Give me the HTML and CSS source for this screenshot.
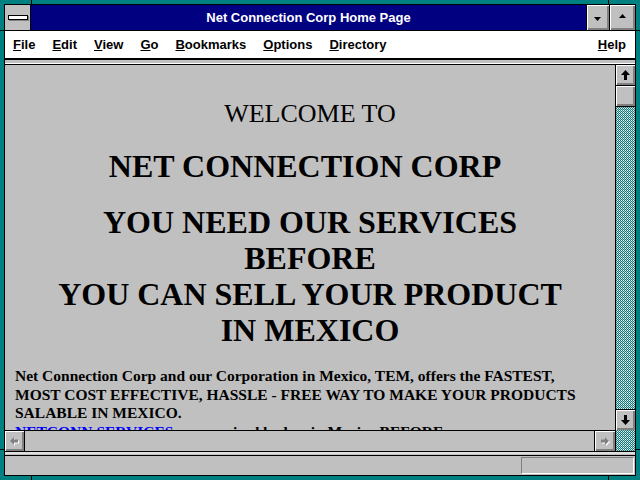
FILE: index.html
```html
<!DOCTYPE html>
<html lang="en">
<head>
    <meta charset="UTF-8">
    <title>Net Connection Corp Home Page</title>
    <link rel="stylesheet" href="styles.css">
</head>
<body>

<div class="screen">
    <div class="window">
        <div class="titlebar">
            <div class="sysmenu"><span class="sysbar"></span></div>
            <div class="caption">Net Connection Corp Home Page</div>
            <div class="tbtn tbtn-min">
                <svg width="8" height="4" viewBox="0 0 8 4"><polygon points="0,0 7,0 3.5,4" fill="#000"/></svg>
            </div>
            <div class="tbtn tbtn-max">
                <svg width="8" height="4" viewBox="0 0 8 4"><polygon points="0,4 7,4 3.5,0" fill="#000"/></svg>
            </div>
        </div>

        <div class="menubar">
            <span class="menu-item"><u>F</u>ile</span>
            <span class="menu-item"><u>E</u>dit</span>
            <span class="menu-item"><u>V</u>iew</span>
            <span class="menu-item"><u>G</u>o</span>
            <span class="menu-item"><u>B</u>ookmarks</span>
            <span class="menu-item"><u>O</u>ptions</span>
            <span class="menu-item"><u>D</u>irectory</span>
            <span class="menu-item menu-help"><u>H</u>elp</span>
        </div>

        <div class="band"></div>

        <div class="view">
            <div class="doc">
                <div class="welcome">WELCOME TO</div>
                <div class="company">NET CONNECTION CORP</div>
                <div class="pitch">YOU NEED OUR SERVICES<br>BEFORE<br>YOU CAN SELL YOUR PRODUCT<br>IN MEXICO</div>
                <p class="intro">Net Connection Corp and our Corporation in Mexico, TEM, offers the FASTEST,<br>MOST COST EFFECTIVE, HASSLE - FREE WAY TO MAKE YOUR PRODUCTS<br>SALABLE IN MEXICO.<br><a href="#">NETCONN SERVICES</a> are required by law in Mexico BEFORE</p>
            </div>

            <div class="vscroll">
                <div class="sbtn">
                    <svg width="9" height="10" viewBox="0 0 9 10"><polygon points="4.5,0 9,5 6,5 6,10 3,10 3,5 0,5" fill="#000"/></svg>
                </div>
                <div class="thumb"></div>
                <div class="trough"></div>
                <div class="sbtn sbtn-down">
                    <svg width="9" height="10" viewBox="0 0 9 10"><polygon points="4.5,10 9,5 6,5 6,0 3,0 3,5 0,5" fill="#000"/></svg>
                </div>
            </div>

            <div class="hscroll">
                <div class="sbtn hbtn">
                    <svg width="11" height="10" viewBox="0 0 11 10">
                        <polygon points="1,5 5,1 5,3.5 9,3.5 9,6.5 5,6.5 5,9" fill="#fff" transform="translate(1,1)"/>
                        <polygon points="1,5 5,1 5,3.5 9,3.5 9,6.5 5,6.5 5,9" fill="#808080"/>
                    </svg>
                </div>
                <div class="htrack"></div>
                <div class="sbtn hbtn hbtn-right">
                    <svg width="11" height="10" viewBox="0 0 11 10">
                        <polygon points="9,5 5,1 5,3.5 1,3.5 1,6.5 5,6.5 5,9" fill="#fff" transform="translate(1,1)"/>
                        <polygon points="9,5 5,1 5,3.5 1,3.5 1,6.5 5,6.5 5,9" fill="#808080"/>
                    </svg>
                </div>
            </div>

            <div class="corner"></div>
        </div>

        <div class="band-bottom"></div>

        <div class="status">
            <div class="status-box"></div>
        </div>
    </div>

    <!-- Rahmen-Kerben -->
    <span class="notch notch-v" style="left: 31px; top: 0;"></span>
    <span class="notch notch-v" style="left: 31px; top: 476px;"></span>
    <span class="notch notch-v" style="left: 608px; top: 0;"></span>
    <span class="notch notch-v" style="left: 608px; top: 476px;"></span>
    <span class="notch notch-h" style="left: 0; top: 30px;"></span>
    <span class="notch notch-h" style="left: 636px; top: 30px;"></span>
    <span class="notch notch-h" style="left: 0; top: 449px;"></span>
    <span class="notch notch-h" style="left: 636px; top: 449px;"></span>
</div>

</body>
</html>
```

FILE: styles.css
```css
body {
    margin: 0;
    background: #008080;
}

.screen {
    position: relative;
    width: 640px;
    height: 480px;
    padding: 4px;
    box-sizing: border-box;
    background: #008080;
    overflow: hidden;
}

.window {
    height: 472px;
    box-sizing: border-box;
    border: 1px solid #000;
    display: flex;
    flex-direction: column;
    background: #c0c0c0;
}

/* Titelleiste */
.titlebar {
    height: 25px;
    display: flex;
    border-bottom: 1px solid #000;
    background: #000080;
}

.sysmenu {
    width: 25px;
    background: #c0c0c0;
    border-right: 1px solid #000;
    display: flex;
    align-items: center;
    justify-content: center;
}

.sysbar {
    width: 18px;
    height: 3px;
    background: #fff;
    border: 1px solid #000;
    box-shadow: 1px 1px 0 #808080;
}

.caption {
    flex: 1;
    color: #fff;
    font-family: 'Liberation Sans', Arial, sans-serif;
    font-weight: bold;
    font-size: 13px;
    line-height: 25px;
    text-align: center;
}

.tbtn {
    border-left: 1px solid #000;
    background: #c0c0c0;
    box-shadow: inset 1px 1px 0 #fff, inset -1px -1px 0 #808080, inset -2px -2px 0 #808080;
    display: flex;
    align-items: center;
    justify-content: center;
}

.tbtn-min {
    width: 22px;
}

.tbtn-max {
    width: 25px;
}

.tbtn-min svg {
    margin-top: 2px;
}

.tbtn-max svg {
    margin-bottom: 4px;
}

/* Menü */
.menubar {
    height: 27px;
    background: #fff;
    border-bottom: 2px solid #000;
    display: flex;
    align-items: center;
    gap: 17px;
    padding: 0 9px 0 8px;
    font-family: 'Liberation Sans', Arial, sans-serif;
    font-weight: bold;
    font-size: 13px;
    color: #000;
}

.menu-help {
    margin-left: auto;
}

.band {
    height: 3px;
    background: #c0c0c0;
    border-bottom: 1px solid #fff;
}

/* Inhaltsbereich */
.view {
    height: 388px;
    box-sizing: border-box;
    border-top: 1px solid #000;
    border-bottom: 1px solid #000;
    display: grid;
    grid-template-columns: 1fr 20px;
    grid-template-rows: 1fr 21px;
}

.doc {
    overflow: hidden;
    padding: 34px 20px 0 10px;
    font-family: 'Liberation Serif', 'Times New Roman', serif;
    color: #000;
}

.welcome {
    padding-left: 10px;
    font-size: 26px;
    line-height: 30px;
    text-align: center;
}

.company {
    margin-top: 19px;
    font-size: 32px;
    font-weight: bold;
    line-height: 36px;
    text-align: center;
}

.pitch {
    margin-top: 20px;
    padding-left: 10px;
    font-size: 32px;
    font-weight: bold;
    line-height: 36px;
    text-align: center;
}

.intro {
    margin: 19px 0 0 0;
    font-size: 15.5px;
    font-weight: bold;
    line-height: 18.5px;
}

.intro a {
    color: #0000ff;
}

/* Bildlaufleisten */
.vscroll {
    border-left: 1px solid #000;
    display: flex;
    flex-direction: column;
}

.sbtn {
    height: 20px;
    flex: none;
    background: #c0c0c0;
    box-shadow: inset 1px 1px 0 #fff, inset -1px -1px 0 #808080, inset -2px -2px 0 #808080;
    display: flex;
    align-items: center;
    justify-content: center;
}

.sbtn-down {
    border-top: 1px solid #000;
}

.thumb {
    height: 20px;
    flex: none;
    border-top: 1px solid #000;
    border-bottom: 1px solid #000;
    background: #c0c0c0;
    box-shadow: inset 1px 1px 0 #fff, inset -1px -1px 0 #808080, inset -2px -2px 0 #808080;
}

.trough,
.corner {
    flex: 1;
    background: conic-gradient(#008080 0 25%, #ffffff 0 50%, #008080 0 75%, #c0c0c0 0 100%) 0 0 / 2px 2px;
}

.hscroll {
    border-top: 1px solid #000;
    display: flex;
}

.hbtn {
    width: 19px;
    border-right: 1px solid #000;
}

.hbtn-right {
    width: 20px;
    border-right: none;
    border-left: 1px solid #000;
}

.htrack {
    flex: 1;
    background: #c0c0c0;
}

.corner {
    border-left: 1px solid #000;
}

/* Statusleiste */
.band-bottom {
    height: 4px;
    box-sizing: border-box;
    background: #c0c0c0;
    border-top: 2px solid #e0e0e0;
    border-bottom: 1px solid #000;
}

.status {
    flex: 1;
    display: flex;
    justify-content: flex-end;
    padding: 1px 1px 0 0;
    background: #c0c0c0;
}

.status-box {
    width: 111px;
    height: 15px;
    border-top: 1px solid #808080;
    border-left: 1px solid #808080;
    border-bottom: 1px solid #fff;
    border-right: 1px solid #fff;
}

.notch {
    position: absolute;
    background: #000;
}

.notch-v {
    width: 1px;
    height: 4px;
}

.notch-h {
    width: 4px;
    height: 1px;
}
```
